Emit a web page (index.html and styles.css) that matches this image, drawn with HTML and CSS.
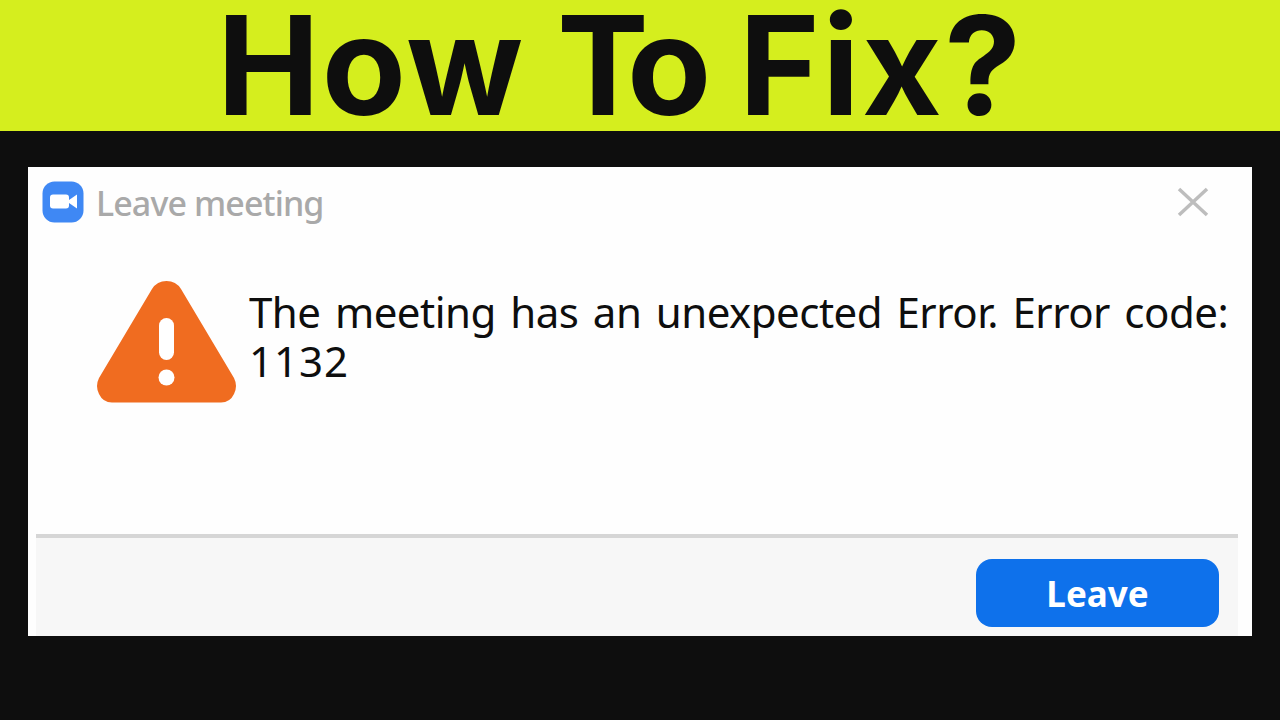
FILE: index.html
```html
<!DOCTYPE html>
<html lang="en">
<head>
    <meta charset="UTF-8">
    <meta name="viewport" content="width=device-width, initial-scale=1.0">
    <title>How To Fix?</title>
    <link rel="stylesheet" href="styles.css">
</head>
<body>
    <h1 class="banner">
        <span class="word-how">How</span>
        <span class="word-to">To</span>
        <span class="word-fix">Fix?</span>
    </h1>

    <div class="dialog">
        <div class="title-bar">
            <svg class="logo" viewBox="0 0 42 42">
                <rect x="0.5" y="0.5" width="41" height="41" rx="12" fill="#3f88f4"/>
                <rect x="8" y="13.500" width="19" height="14" rx="3" fill="#fff"/>
                <path d="M27 19l8-5.500v14l-8-5.500z" fill="#fff"/>
            </svg>
            <span class="title">Leave meeting</span>
            <svg class="close" viewBox="0 0 32 30">
                <path d="M2 2l28 26M30 2L2 28" stroke="#bdbdbd" stroke-width="3.500" fill="none"/>
            </svg>
        </div>

        <div class="content">
            <svg class="warning" viewBox="0 0 140 124">
                <path d="M55 8Q60 0 69.500 0T84 8L137 97Q141 105 137 113Q133 121.500 124 121.500H15Q6 121.500 2 113Q-2 105 2 97Z" fill="#f06c20"/>
                <rect x="62" y="37" width="15" height="42" rx="7.500" fill="#fff"/>
                <circle cx="69.500" cy="96.500" r="8" fill="#fff"/>
            </svg>
            <p class="message">The meeting has an unexpected Error. Error code:<br><span class="code">1132</span></p>
        </div>

        <div class="footer">
            <button class="button">Leave</button>
        </div>
    </div>
</body>
</html>
```

FILE: styles.css
```css
* {
    box-sizing: border-box;
}
body {
    margin: 0;
    height: 720px;
    overflow: hidden;
    background-color: #0e0e0e;
}
.banner {
    display: flex;
    height: 131px;
    margin: 0;
    padding-left: 217px;
    background-color: #d5ee1e;
    color: #0e0e0e;
    font-family: Inter, sans-serif;
    font-size: 137.5px;
    font-weight: 650;
    line-height: 131px;
    white-space: nowrap;
}
.word-how {
    width: 340px;
    letter-spacing: 2px;
}
.word-to {
    width: 182px;
    letter-spacing: -11px;
}
.word-fix {
    letter-spacing: 2.5px;
}
.dialog {
    display: flex;
    flex-direction: column;
    width: 1224px;
    height: 469px;
    margin: 36px 28px 0;
    background-color: #fefefe;
}
.title-bar {
    display: flex;
    align-items: center;
    height: 70px;
    padding: 0 43px 0 14px;
}
.logo {
    width: 42px;
    height: 42px;
}
.title {
    margin: 2px 0 0 12px;
    color: #a9a9a9;
    font-family: "Noto Sans", sans-serif;
    font-size: 34px;
    font-weight: 500;
    line-height: 42px;
    letter-spacing: -0.9px;
}
.close {
    width: 32px;
    height: 30px;
    margin-left: auto;
}
.content {
    display: flex;
    flex: 1;
    padding: 44px 0 0 69px;
}
.warning {
    width: 140px;
    height: 124px;
    flex-shrink: 0;
}
.message {
    margin: 6px 0 0 12px;
    color: #0e0e0e;
    font-family: "Noto Sans", sans-serif;
    font-size: 42px;
    line-height: 49px;
    letter-spacing: -0.5px;
    word-spacing: 4px;
    white-space: nowrap;
}
.code {
    letter-spacing: 1px;
}
.footer {
    display: flex;
    justify-content: flex-end;
    height: 102px;
    margin: 0 14px 0 8px;
    padding: 21px 19px 0 0;
    border-top: 4px solid #d6d6d6;
    background-color: #f7f7f7;
}
.button {
    width: 243px;
    height: 68px;
    padding: 0;
    border: none;
    border-radius: 16px;
    background-color: #0e71eb;
    color: #fff;
    font-family: "Noto Sans", sans-serif;
    font-size: 35px;
    font-weight: bold;
    cursor: pointer;
}
```
